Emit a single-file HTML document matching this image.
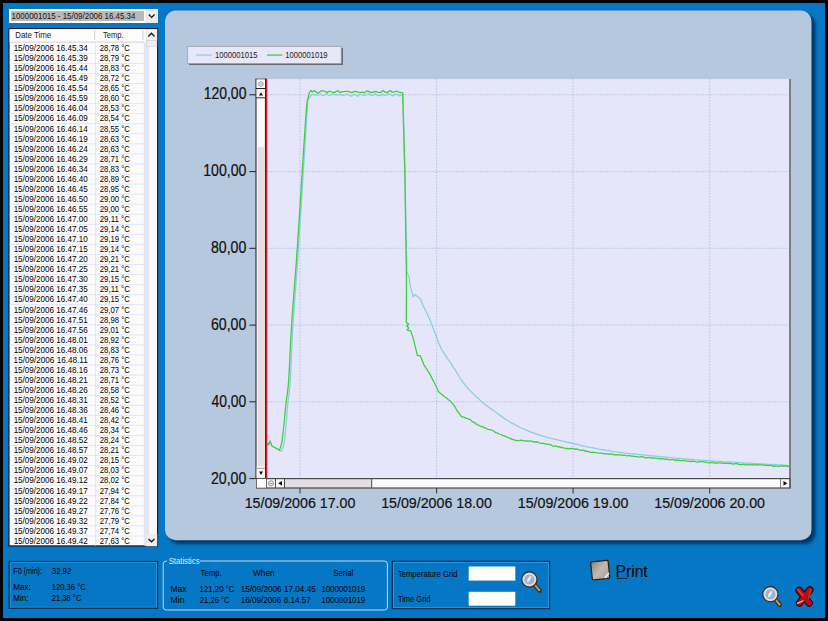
<!DOCTYPE html>
<html><head><meta charset="utf-8"><style>html,body{margin:0;padding:0;background:#000;overflow:hidden}svg{display:block}text{font-family:"Liberation Sans",sans-serif}</style></head>
<body><svg width="828" height="621" viewBox="0 0 828 621">
<rect width="828" height="621" fill="#000"/>
<rect x="3" y="3" width="822" height="615" fill="#0677c4"/>
<rect x="9" y="9" width="149" height="14" fill="#fdfdfd"/>
<rect x="11" y="11" width="133" height="10" fill="#b9b9b9"/>
<text transform="matrix(0.9336 0 0 1.0 11.50 18.80)" font-size="8.5" fill="#111">1000001015 - 15/09/2006 16.45.34</text>
<rect x="146" y="10" width="11" height="12.5" fill="#eeeef2" stroke="#d8d8e0" stroke-width="0.6"/>
<path d="M148.8 14.6 L151.7 17.4 L154.6 14.6" fill="none" stroke="#1a1a1a" stroke-width="1.4"/>
<rect x="8.3" y="28" width="149.9" height="518.6" fill="#1e1e1e"/>
<rect x="9.6" y="29.3" width="147.4" height="516" fill="#fbfbfb"/>
<rect x="9.6" y="29.3" width="136" height="12.7" fill="#fcfcfc"/>
<rect x="9.6" y="41.6" width="135" height="1" fill="#d9cfd3"/>
<rect x="94.2" y="30.5" width="0.9" height="9.5" fill="#c8c8c8"/>
<rect x="142.5" y="30.5" width="0.9" height="9.5" fill="#c8c8d8"/>
<text transform="matrix(0.8308 0 0 1.0 15.28 38.20)" font-size="9.5" fill="#1a1a1a">Date Time</text>
<text transform="matrix(0.8000 0 0 1.0 103.00 38.20)" font-size="9.5" fill="#1a1a1a">Temp.</text>
<rect x="143.8" y="42.6" width="5.4" height="503" fill="#e4e4f6"/>
<rect x="95" y="42.6" width="0.9" height="503" fill="#e2e2f4"/>
<rect x="9.6" y="52.90" width="134.2" height="0.9" fill="#e2e2f4"/>
<text transform="matrix(0.8982 0 0 1.0 13.63 51.10)" font-size="9.0" fill="#000">15/09/2006 16.45.34</text>
<text transform="matrix(0.8613 0 0 1.0 99.67 51.10)" font-size="9.0" fill="#000">28,78 °C</text>
<rect x="9.6" y="62.95" width="134.2" height="0.9" fill="#e2e2f4"/>
<text transform="matrix(0.8982 0 0 1.0 13.63 61.16)" font-size="9.0" fill="#000">15/09/2006 16.45.39</text>
<text transform="matrix(0.8613 0 0 1.0 99.67 61.16)" font-size="9.0" fill="#000">28,79 °C</text>
<rect x="9.6" y="73.01" width="134.2" height="0.9" fill="#e2e2f4"/>
<text transform="matrix(0.8982 0 0 1.0 13.63 71.21)" font-size="9.0" fill="#000">15/09/2006 16.45.44</text>
<text transform="matrix(0.8613 0 0 1.0 99.67 71.21)" font-size="9.0" fill="#000">28,83 °C</text>
<rect x="9.6" y="83.06" width="134.2" height="0.9" fill="#e2e2f4"/>
<text transform="matrix(0.8982 0 0 1.0 13.63 81.27)" font-size="9.0" fill="#000">15/09/2006 16.45.49</text>
<text transform="matrix(0.8613 0 0 1.0 99.67 81.27)" font-size="9.0" fill="#000">28,72 °C</text>
<rect x="9.6" y="93.12" width="134.2" height="0.9" fill="#e2e2f4"/>
<text transform="matrix(0.8982 0 0 1.0 13.63 91.32)" font-size="9.0" fill="#000">15/09/2006 16.45.54</text>
<text transform="matrix(0.8613 0 0 1.0 99.67 91.32)" font-size="9.0" fill="#000">28,65 °C</text>
<rect x="9.6" y="103.17" width="134.2" height="0.9" fill="#e2e2f4"/>
<text transform="matrix(0.8982 0 0 1.0 13.63 101.38)" font-size="9.0" fill="#000">15/09/2006 16.45.59</text>
<text transform="matrix(0.8613 0 0 1.0 99.67 101.38)" font-size="9.0" fill="#000">28,60 °C</text>
<rect x="9.6" y="113.23" width="134.2" height="0.9" fill="#e2e2f4"/>
<text transform="matrix(0.8982 0 0 1.0 13.63 111.43)" font-size="9.0" fill="#000">15/09/2006 16.46.04</text>
<text transform="matrix(0.8613 0 0 1.0 99.67 111.43)" font-size="9.0" fill="#000">28,53 °C</text>
<rect x="9.6" y="123.28" width="134.2" height="0.9" fill="#e2e2f4"/>
<text transform="matrix(0.8982 0 0 1.0 13.63 121.48)" font-size="9.0" fill="#000">15/09/2006 16.46.09</text>
<text transform="matrix(0.8613 0 0 1.0 99.67 121.48)" font-size="9.0" fill="#000">28,54 °C</text>
<rect x="9.6" y="133.34" width="134.2" height="0.9" fill="#e2e2f4"/>
<text transform="matrix(0.8982 0 0 1.0 13.63 131.54)" font-size="9.0" fill="#000">15/09/2006 16.46.14</text>
<text transform="matrix(0.8613 0 0 1.0 99.67 131.54)" font-size="9.0" fill="#000">28,55 °C</text>
<rect x="9.6" y="143.40" width="134.2" height="0.9" fill="#e2e2f4"/>
<text transform="matrix(0.8982 0 0 1.0 13.63 141.59)" font-size="9.0" fill="#000">15/09/2006 16.46.19</text>
<text transform="matrix(0.8613 0 0 1.0 99.67 141.59)" font-size="9.0" fill="#000">28,63 °C</text>
<rect x="9.6" y="153.45" width="134.2" height="0.9" fill="#e2e2f4"/>
<text transform="matrix(0.8982 0 0 1.0 13.63 151.65)" font-size="9.0" fill="#000">15/09/2006 16.46.24</text>
<text transform="matrix(0.8613 0 0 1.0 99.67 151.65)" font-size="9.0" fill="#000">28,63 °C</text>
<rect x="9.6" y="163.50" width="134.2" height="0.9" fill="#e2e2f4"/>
<text transform="matrix(0.8982 0 0 1.0 13.63 161.70)" font-size="9.0" fill="#000">15/09/2006 16.46.29</text>
<text transform="matrix(0.8613 0 0 1.0 99.67 161.70)" font-size="9.0" fill="#000">28,71 °C</text>
<rect x="9.6" y="173.56" width="134.2" height="0.9" fill="#e2e2f4"/>
<text transform="matrix(0.8982 0 0 1.0 13.63 171.76)" font-size="9.0" fill="#000">15/09/2006 16.46.34</text>
<text transform="matrix(0.8613 0 0 1.0 99.67 171.76)" font-size="9.0" fill="#000">28,83 °C</text>
<rect x="9.6" y="183.62" width="134.2" height="0.9" fill="#e2e2f4"/>
<text transform="matrix(0.8982 0 0 1.0 13.63 181.81)" font-size="9.0" fill="#000">15/09/2006 16.46.40</text>
<text transform="matrix(0.8613 0 0 1.0 99.67 181.81)" font-size="9.0" fill="#000">28,89 °C</text>
<rect x="9.6" y="193.67" width="134.2" height="0.9" fill="#e2e2f4"/>
<text transform="matrix(0.8982 0 0 1.0 13.63 191.87)" font-size="9.0" fill="#000">15/09/2006 16.46.45</text>
<text transform="matrix(0.8613 0 0 1.0 99.67 191.87)" font-size="9.0" fill="#000">28,95 °C</text>
<rect x="9.6" y="203.72" width="134.2" height="0.9" fill="#e2e2f4"/>
<text transform="matrix(0.8982 0 0 1.0 13.63 201.92)" font-size="9.0" fill="#000">15/09/2006 16.46.50</text>
<text transform="matrix(0.8613 0 0 1.0 99.67 201.92)" font-size="9.0" fill="#000">29,00 °C</text>
<rect x="9.6" y="213.78" width="134.2" height="0.9" fill="#e2e2f4"/>
<text transform="matrix(0.8982 0 0 1.0 13.63 211.98)" font-size="9.0" fill="#000">15/09/2006 16.46.55</text>
<text transform="matrix(0.8613 0 0 1.0 99.67 211.98)" font-size="9.0" fill="#000">29,00 °C</text>
<rect x="9.6" y="223.84" width="134.2" height="0.9" fill="#e2e2f4"/>
<text transform="matrix(0.8982 0 0 1.0 13.63 222.03)" font-size="9.0" fill="#000">15/09/2006 16.47.00</text>
<text transform="matrix(0.8806 0 0 1.0 99.66 222.03)" font-size="9.0" fill="#000">29,11 °C</text>
<rect x="9.6" y="233.89" width="134.2" height="0.9" fill="#e2e2f4"/>
<text transform="matrix(0.8982 0 0 1.0 13.63 232.09)" font-size="9.0" fill="#000">15/09/2006 16.47.05</text>
<text transform="matrix(0.8613 0 0 1.0 99.67 232.09)" font-size="9.0" fill="#000">29,14 °C</text>
<rect x="9.6" y="243.94" width="134.2" height="0.9" fill="#e2e2f4"/>
<text transform="matrix(0.8982 0 0 1.0 13.63 242.14)" font-size="9.0" fill="#000">15/09/2006 16.47.10</text>
<text transform="matrix(0.8613 0 0 1.0 99.67 242.14)" font-size="9.0" fill="#000">29,19 °C</text>
<rect x="9.6" y="254.00" width="134.2" height="0.9" fill="#e2e2f4"/>
<text transform="matrix(0.8982 0 0 1.0 13.63 252.20)" font-size="9.0" fill="#000">15/09/2006 16.47.15</text>
<text transform="matrix(0.8613 0 0 1.0 99.67 252.20)" font-size="9.0" fill="#000">29,14 °C</text>
<rect x="9.6" y="264.06" width="134.2" height="0.9" fill="#e2e2f4"/>
<text transform="matrix(0.8982 0 0 1.0 13.63 262.25)" font-size="9.0" fill="#000">15/09/2006 16.47.20</text>
<text transform="matrix(0.8613 0 0 1.0 99.67 262.25)" font-size="9.0" fill="#000">29,21 °C</text>
<rect x="9.6" y="274.11" width="134.2" height="0.9" fill="#e2e2f4"/>
<text transform="matrix(0.8982 0 0 1.0 13.63 272.31)" font-size="9.0" fill="#000">15/09/2006 16.47.25</text>
<text transform="matrix(0.8613 0 0 1.0 99.67 272.31)" font-size="9.0" fill="#000">29,21 °C</text>
<rect x="9.6" y="284.16" width="134.2" height="0.9" fill="#e2e2f4"/>
<text transform="matrix(0.8982 0 0 1.0 13.63 282.37)" font-size="9.0" fill="#000">15/09/2006 16.47.30</text>
<text transform="matrix(0.8613 0 0 1.0 99.67 282.37)" font-size="9.0" fill="#000">29,15 °C</text>
<rect x="9.6" y="294.22" width="134.2" height="0.9" fill="#e2e2f4"/>
<text transform="matrix(0.8982 0 0 1.0 13.63 292.42)" font-size="9.0" fill="#000">15/09/2006 16.47.35</text>
<text transform="matrix(0.8806 0 0 1.0 99.66 292.42)" font-size="9.0" fill="#000">29,11 °C</text>
<rect x="9.6" y="304.27" width="134.2" height="0.9" fill="#e2e2f4"/>
<text transform="matrix(0.8982 0 0 1.0 13.63 302.48)" font-size="9.0" fill="#000">15/09/2006 16.47.40</text>
<text transform="matrix(0.8613 0 0 1.0 99.67 302.48)" font-size="9.0" fill="#000">29,15 °C</text>
<rect x="9.6" y="314.33" width="134.2" height="0.9" fill="#e2e2f4"/>
<text transform="matrix(0.8982 0 0 1.0 13.63 312.53)" font-size="9.0" fill="#000">15/09/2006 16.47.46</text>
<text transform="matrix(0.8613 0 0 1.0 99.67 312.53)" font-size="9.0" fill="#000">29,07 °C</text>
<rect x="9.6" y="324.38" width="134.2" height="0.9" fill="#e2e2f4"/>
<text transform="matrix(0.8982 0 0 1.0 13.63 322.59)" font-size="9.0" fill="#000">15/09/2006 16.47.51</text>
<text transform="matrix(0.8613 0 0 1.0 99.67 322.59)" font-size="9.0" fill="#000">28,98 °C</text>
<rect x="9.6" y="334.44" width="134.2" height="0.9" fill="#e2e2f4"/>
<text transform="matrix(0.8982 0 0 1.0 13.63 332.64)" font-size="9.0" fill="#000">15/09/2006 16.47.56</text>
<text transform="matrix(0.8613 0 0 1.0 99.67 332.64)" font-size="9.0" fill="#000">29,01 °C</text>
<rect x="9.6" y="344.49" width="134.2" height="0.9" fill="#e2e2f4"/>
<text transform="matrix(0.8982 0 0 1.0 13.63 342.69)" font-size="9.0" fill="#000">15/09/2006 16.48.01</text>
<text transform="matrix(0.8613 0 0 1.0 99.67 342.69)" font-size="9.0" fill="#000">28,92 °C</text>
<rect x="9.6" y="354.55" width="134.2" height="0.9" fill="#e2e2f4"/>
<text transform="matrix(0.8982 0 0 1.0 13.63 352.75)" font-size="9.0" fill="#000">15/09/2006 16.48.06</text>
<text transform="matrix(0.8613 0 0 1.0 99.67 352.75)" font-size="9.0" fill="#000">28,83 °C</text>
<rect x="9.6" y="364.60" width="134.2" height="0.9" fill="#e2e2f4"/>
<text transform="matrix(0.9065 0 0 1.0 13.62 362.81)" font-size="9.0" fill="#000">15/09/2006 16.48.11</text>
<text transform="matrix(0.8613 0 0 1.0 99.67 362.81)" font-size="9.0" fill="#000">28,76 °C</text>
<rect x="9.6" y="374.66" width="134.2" height="0.9" fill="#e2e2f4"/>
<text transform="matrix(0.8982 0 0 1.0 13.63 372.86)" font-size="9.0" fill="#000">15/09/2006 16.48.16</text>
<text transform="matrix(0.8613 0 0 1.0 99.67 372.86)" font-size="9.0" fill="#000">28,73 °C</text>
<rect x="9.6" y="384.71" width="134.2" height="0.9" fill="#e2e2f4"/>
<text transform="matrix(0.8982 0 0 1.0 13.63 382.92)" font-size="9.0" fill="#000">15/09/2006 16.48.21</text>
<text transform="matrix(0.8613 0 0 1.0 99.67 382.92)" font-size="9.0" fill="#000">28,71 °C</text>
<rect x="9.6" y="394.77" width="134.2" height="0.9" fill="#e2e2f4"/>
<text transform="matrix(0.8982 0 0 1.0 13.63 392.97)" font-size="9.0" fill="#000">15/09/2006 16.48.26</text>
<text transform="matrix(0.8613 0 0 1.0 99.67 392.97)" font-size="9.0" fill="#000">28,58 °C</text>
<rect x="9.6" y="404.82" width="134.2" height="0.9" fill="#e2e2f4"/>
<text transform="matrix(0.8982 0 0 1.0 13.63 403.03)" font-size="9.0" fill="#000">15/09/2006 16.48.31</text>
<text transform="matrix(0.8613 0 0 1.0 99.67 403.03)" font-size="9.0" fill="#000">28,52 °C</text>
<rect x="9.6" y="414.88" width="134.2" height="0.9" fill="#e2e2f4"/>
<text transform="matrix(0.8982 0 0 1.0 13.63 413.08)" font-size="9.0" fill="#000">15/09/2006 16.48.36</text>
<text transform="matrix(0.8613 0 0 1.0 99.67 413.08)" font-size="9.0" fill="#000">28,46 °C</text>
<rect x="9.6" y="424.93" width="134.2" height="0.9" fill="#e2e2f4"/>
<text transform="matrix(0.8982 0 0 1.0 13.63 423.13)" font-size="9.0" fill="#000">15/09/2006 16.48.41</text>
<text transform="matrix(0.8613 0 0 1.0 99.67 423.13)" font-size="9.0" fill="#000">28,42 °C</text>
<rect x="9.6" y="434.99" width="134.2" height="0.9" fill="#e2e2f4"/>
<text transform="matrix(0.8982 0 0 1.0 13.63 433.19)" font-size="9.0" fill="#000">15/09/2006 16.48.46</text>
<text transform="matrix(0.8613 0 0 1.0 99.67 433.19)" font-size="9.0" fill="#000">28,34 °C</text>
<rect x="9.6" y="445.04" width="134.2" height="0.9" fill="#e2e2f4"/>
<text transform="matrix(0.8982 0 0 1.0 13.63 443.25)" font-size="9.0" fill="#000">15/09/2006 16.48.52</text>
<text transform="matrix(0.8613 0 0 1.0 99.67 443.25)" font-size="9.0" fill="#000">28,24 °C</text>
<rect x="9.6" y="455.10" width="134.2" height="0.9" fill="#e2e2f4"/>
<text transform="matrix(0.8982 0 0 1.0 13.63 453.30)" font-size="9.0" fill="#000">15/09/2006 16.48.57</text>
<text transform="matrix(0.8613 0 0 1.0 99.67 453.30)" font-size="9.0" fill="#000">28,21 °C</text>
<rect x="9.6" y="465.15" width="134.2" height="0.9" fill="#e2e2f4"/>
<text transform="matrix(0.8982 0 0 1.0 13.63 463.36)" font-size="9.0" fill="#000">15/09/2006 16.49.02</text>
<text transform="matrix(0.8613 0 0 1.0 99.67 463.36)" font-size="9.0" fill="#000">28,15 °C</text>
<rect x="9.6" y="475.21" width="134.2" height="0.9" fill="#e2e2f4"/>
<text transform="matrix(0.8982 0 0 1.0 13.63 473.41)" font-size="9.0" fill="#000">15/09/2006 16.49.07</text>
<text transform="matrix(0.8613 0 0 1.0 99.67 473.41)" font-size="9.0" fill="#000">28,03 °C</text>
<rect x="9.6" y="485.26" width="134.2" height="0.9" fill="#e2e2f4"/>
<text transform="matrix(0.8982 0 0 1.0 13.63 483.47)" font-size="9.0" fill="#000">15/09/2006 16.49.12</text>
<text transform="matrix(0.8613 0 0 1.0 99.67 483.47)" font-size="9.0" fill="#000">28,02 °C</text>
<rect x="9.6" y="495.32" width="134.2" height="0.9" fill="#e2e2f4"/>
<text transform="matrix(0.8982 0 0 1.0 13.63 493.52)" font-size="9.0" fill="#000">15/09/2006 16.49.17</text>
<text transform="matrix(0.8613 0 0 1.0 99.67 493.52)" font-size="9.0" fill="#000">27,94 °C</text>
<rect x="9.6" y="505.37" width="134.2" height="0.9" fill="#e2e2f4"/>
<text transform="matrix(0.8982 0 0 1.0 13.63 503.57)" font-size="9.0" fill="#000">15/09/2006 16.49.22</text>
<text transform="matrix(0.8613 0 0 1.0 99.67 503.57)" font-size="9.0" fill="#000">27,84 °C</text>
<rect x="9.6" y="515.43" width="134.2" height="0.9" fill="#e2e2f4"/>
<text transform="matrix(0.8982 0 0 1.0 13.63 513.63)" font-size="9.0" fill="#000">15/09/2006 16.49.27</text>
<text transform="matrix(0.8613 0 0 1.0 99.67 513.63)" font-size="9.0" fill="#000">27,76 °C</text>
<rect x="9.6" y="525.49" width="134.2" height="0.9" fill="#e2e2f4"/>
<text transform="matrix(0.8982 0 0 1.0 13.63 523.68)" font-size="9.0" fill="#000">15/09/2006 16.49.32</text>
<text transform="matrix(0.8613 0 0 1.0 99.67 523.68)" font-size="9.0" fill="#000">27,79 °C</text>
<rect x="9.6" y="535.54" width="134.2" height="0.9" fill="#e2e2f4"/>
<text transform="matrix(0.8982 0 0 1.0 13.63 533.74)" font-size="9.0" fill="#000">15/09/2006 16.49.37</text>
<text transform="matrix(0.8613 0 0 1.0 99.67 533.74)" font-size="9.0" fill="#000">27,74 °C</text>
<text transform="matrix(0.8982 0 0 1.0 13.63 543.79)" font-size="9.0" fill="#000">15/09/2006 16.49.42</text>
<text transform="matrix(0.8613 0 0 1.0 99.67 543.79)" font-size="9.0" fill="#000">27,63 °C</text>
<rect x="146.3" y="29.3" width="10.7" height="11.4" fill="#f4f4f8" stroke="#dcdce6" stroke-width="0.5"/>
<path d="M148.3 36.4 L151.4 33.2 L154.5 36.4" fill="none" stroke="#1a1a1a" stroke-width="1.4"/>
<rect x="146.6" y="40.7" width="10.3" height="5.6" fill="#ececf2" stroke="#c8c8d0" stroke-width="0.5"/>
<rect x="146.3" y="534.2" width="10.7" height="11.8" fill="#f0f0f4" stroke="#dcdce6" stroke-width="0.5"/>
<path d="M148.5 539 L151.5 541.8 L154.5 539" fill="none" stroke="#1a1a1a" stroke-width="1.4"/>
<defs><filter id="sh" x="-5%" y="-5%" width="110%" height="110%"><feGaussianBlur stdDeviation="1.6"/></filter></defs>
<rect x="168.5" y="14" width="647" height="530" rx="11" fill="#03396a" filter="url(#sh)"/>
<rect x="165" y="10.6" width="646.5" height="529.6" rx="10.5" fill="#b6c8de"/>
<rect x="189" y="48" width="154" height="17" fill="#6a6a72"/>
<rect x="187.7" y="46.5" width="153.5" height="17" fill="#e7e7f9" stroke="#9a9aa4" stroke-width="0.7"/>
<rect x="196" y="54.3" width="16" height="1.6" fill="#a0d6e0"/>
<rect x="267" y="54.3" width="15.3" height="1.6" fill="#64d264"/>
<text transform="matrix(0.8510 0 0 1.0 214.96 58.10)" font-size="9" fill="#222">1000001015</text>
<text transform="matrix(0.8469 0 0 1.0 285.26 58.10)" font-size="9" fill="#222">1000001019</text>
<rect x="267.2" y="79.1" width="522.0" height="399.29999999999995" fill="#e6e6fa"/>
<rect x="789.2" y="79.1" width="1.6" height="400" fill="#6a6a6a"/>
<line x1="267.2" y1="401.8" x2="789.2" y2="401.8" stroke="#a6bed8" stroke-width="0.9" stroke-dasharray="1.4,1.6"/>
<line x1="267.2" y1="325.1" x2="789.2" y2="325.1" stroke="#a6bed8" stroke-width="0.9" stroke-dasharray="1.4,1.6"/>
<line x1="267.2" y1="248.3" x2="789.2" y2="248.3" stroke="#a6bed8" stroke-width="0.9" stroke-dasharray="1.4,1.6"/>
<line x1="267.2" y1="171.6" x2="789.2" y2="171.6" stroke="#a6bed8" stroke-width="0.9" stroke-dasharray="1.4,1.6"/>
<line x1="267.2" y1="94.8" x2="789.2" y2="94.8" stroke="#a6bed8" stroke-width="0.9" stroke-dasharray="1.4,1.6"/>
<line x1="300.0" y1="79.1" x2="300.0" y2="478.4" stroke="#a6bed8" stroke-width="0.9" stroke-dasharray="1.4,1.6"/>
<line x1="436.6" y1="79.1" x2="436.6" y2="478.4" stroke="#a6bed8" stroke-width="0.9" stroke-dasharray="1.4,1.6"/>
<line x1="573.1" y1="79.1" x2="573.1" y2="478.4" stroke="#a6bed8" stroke-width="0.9" stroke-dasharray="1.4,1.6"/>
<line x1="709.7" y1="79.1" x2="709.7" y2="478.4" stroke="#a6bed8" stroke-width="0.9" stroke-dasharray="1.4,1.6"/>
<polyline points="267.2,444.5 270.0,442.0 272.0,446.0 281.0,451.5 283.5,446.0 283.9,443.7 284.4,440.9 284.8,437.8 285.2,434.1 285.6,430.0 285.9,427.4 286.1,424.5 286.4,421.3 286.7,418.0 286.9,414.7 287.2,411.3 287.5,408.0 287.7,404.9 288.0,402.0 288.3,398.8 288.7,396.2 289.0,393.9 289.3,391.4 289.6,388.5 290.0,384.8 290.3,380.0 290.4,377.8 290.6,375.5 290.7,373.0 290.8,370.4 290.9,367.7 291.1,364.9 291.2,362.0 291.3,359.0 291.5,355.9 291.6,352.8 291.7,349.5 291.9,346.2 292.0,342.8 292.2,339.3 292.4,335.8 292.6,332.3 292.8,328.6 293.0,325.0 293.2,322.4 293.3,319.7 293.5,317.0 293.7,314.4 293.9,311.7 294.1,308.9 294.3,306.2 294.5,303.4 294.7,300.6 294.9,297.8 295.1,294.9 295.3,291.9 295.6,288.9 295.8,285.9 296.0,282.8 296.3,279.7 296.5,276.4 296.7,273.2 297.0,269.8 297.2,266.4 297.5,262.9 297.7,259.3 298.0,255.6 298.2,251.9 298.5,248.0 298.7,245.4 298.8,242.8 299.0,240.0 299.2,237.2 299.4,234.2 299.6,231.2 299.8,228.1 300.0,225.0 300.2,221.8 300.4,218.5 300.6,215.2 300.8,211.8 301.1,208.4 301.3,205.0 301.5,201.6 301.7,198.1 301.9,194.7 302.1,191.2 302.4,187.8 302.6,184.3 302.8,180.9 303.0,177.5 303.2,174.2 303.4,170.8 303.6,167.6 303.8,164.3 304.0,161.2 304.2,158.1 304.4,155.0 304.6,152.1 304.8,149.2 305.0,146.4 305.1,143.7 305.3,141.1 305.4,138.7 305.6,136.3 305.7,134.1 305.9,132.0 306.0,130.0 306.4,123.3 306.8,117.9 307.0,113.7 307.2,110.4 307.3,107.8 307.5,105.9 307.6,104.3 307.7,102.9 307.8,101.5 308.0,100.0 310.1,96.5 311.6,94.6 313.8,94.5 316.0,95.4 318.2,94.8 320.4,94.0 322.6,95.8 324.8,94.7 327.0,93.8 329.2,95.7 331.4,94.6 333.6,94.1 335.8,95.0 338.0,94.9 340.2,94.1 342.4,95.6 344.6,95.2 346.8,94.0 349.0,95.1 351.2,96.3 353.4,94.5 355.6,94.6 357.8,96.4 360.0,94.1 362.2,94.9 364.4,95.5 366.6,94.5 368.8,93.8 371.0,95.4 373.2,95.6 375.4,93.8 377.6,95.5 379.8,95.6 382.0,94.1 384.2,95.2 386.4,95.1 388.6,93.8 390.8,94.5 393.0,96.0 395.2,94.4 397.4,94.4 399.6,95.9 401.8,94.7 404.0,94.2 403.0,94.8 404.8,170.0 406.9,272.3 409.1,276.7 410.3,286.4 413.1,296.9 415.1,294.5 420.4,298.9 422.8,305.0 424.7,308.8 427.4,314.3 430.0,320.0 432.3,325.8 434.6,331.9 436.7,337.4 438.7,343.1 441.5,349.0 443.2,351.8 445.2,354.9 447.4,358.3 449.7,361.7 452.0,365.1 454.1,368.3 456.4,371.9 458.6,375.5 460.8,379.0 463.1,382.4 465.7,385.7 467.7,388.0 469.8,390.4 472.1,392.7 474.4,394.9 476.7,397.1 479.0,399.2 481.2,401.2 483.4,403.1 485.7,404.9 487.9,406.6 490.1,408.2 492.3,409.8 494.5,411.3 496.6,412.8 498.9,414.5 501.1,416.1 503.2,417.6 505.3,419.1 507.6,420.5 510.0,422.0 511.9,423.1 514.0,424.2 516.1,425.3 518.2,426.4 520.4,427.5 522.6,428.5 524.8,429.5 526.9,430.4 529.0,431.3 531.1,432.1 533.2,432.9 535.3,433.7 537.5,434.4 539.6,435.1 541.7,435.8 543.8,436.4 545.9,437.0 548.1,437.6 550.3,438.2 552.5,438.7 554.7,439.2 556.8,439.7 558.8,440.1 560.7,440.6 563.0,441.2 564.9,441.6 566.8,442.1 568.7,442.5 570.8,443.0 573.4,443.6 575.2,444.0 577.0,444.4 579.0,444.9 581.0,445.3 583.2,445.8 585.3,446.3 587.6,446.8 589.9,447.3 592.2,447.7 594.5,448.2 596.5,448.6 598.4,448.9 600.4,449.3 602.5,449.7 604.5,450.0 606.6,450.4 608.8,450.7 610.9,451.1 613.1,451.4 615.3,451.8 617.6,452.1 619.9,452.4 621.8,452.6 623.7,452.9 625.6,453.1 627.6,453.3 629.6,453.6 631.6,453.8 633.6,454.0 635.7,454.2 637.7,454.4 639.8,454.6 641.9,454.8 643.9,455.0 646.0,455.2 648.0,455.4 650.0,455.6 652.0,455.8 654.0,456.0 656.0,456.2 658.0,456.4 660.0,456.6 662.0,456.8 664.0,457.0 666.0,457.2 668.0,457.4 670.0,457.6 672.0,457.8 674.0,458.0 676.0,458.1 678.0,458.3 680.0,458.5 682.1,458.7 684.2,458.9 686.2,459.0 688.2,459.2 690.2,459.4 692.1,459.5 694.2,459.7 696.2,459.8 698.2,460.0 700.4,460.2 702.5,460.3 704.8,460.5 707.2,460.6 709.6,460.8 711.4,460.9 713.2,461.0 715.1,461.2 717.0,461.3 719.0,461.4 721.0,461.5 723.0,461.6 725.0,461.8 727.1,461.9 729.2,462.0 731.3,462.1 733.4,462.2 735.5,462.4 737.6,462.5 739.7,462.6 741.8,462.7 743.9,462.8 746.0,463.0 748.0,463.1 750.0,463.2 752.1,463.3 754.4,463.5 756.7,463.6 759.0,463.7 761.4,463.8 763.8,464.0 766.2,464.1 768.6,464.3 771.0,464.4 773.3,464.5 775.5,464.6 777.7,464.8 779.8,464.9 781.7,465.0 783.5,465.1 785.2,465.2 786.7,465.3 788.1,465.3 789.2,465.4" fill="none" stroke="#8ccfdc" stroke-width="1.3" stroke-linejoin="round"/>
<polyline points="267.2,443.6 268.5,445.0 270.0,440.9 272.0,446.0 279.3,450.0 280.3,448.0 281.5,444.0 281.9,441.6 282.3,438.8 282.7,435.6 283.1,432.0 283.6,428.0 283.9,425.2 284.2,422.0 284.5,418.7 284.9,415.1 285.2,411.6 285.5,408.1 285.9,404.7 286.2,401.6 286.6,398.6 286.9,396.1 287.3,393.8 287.6,391.3 288.0,388.5 288.3,384.8 288.7,380.0 288.8,377.8 289.0,375.5 289.1,373.0 289.3,370.4 289.4,367.8 289.5,365.0 289.7,362.1 289.8,359.1 289.9,356.0 290.1,352.8 290.3,349.5 290.4,346.2 290.6,342.8 290.8,339.3 290.9,335.8 291.2,332.3 291.4,328.6 291.6,325.0 291.8,322.4 292.0,319.7 292.1,317.0 292.3,314.4 292.5,311.7 292.7,308.9 292.9,306.2 293.2,303.4 293.4,300.6 293.6,297.8 293.8,294.9 294.0,291.9 294.3,288.9 294.5,285.9 294.7,282.8 295.0,279.7 295.2,276.4 295.5,273.2 295.7,269.8 296.0,266.4 296.3,262.9 296.5,259.3 296.8,255.6 297.0,251.9 297.3,248.0 297.5,245.4 297.7,242.8 297.8,240.0 298.0,237.2 298.2,234.2 298.4,231.2 298.6,228.1 298.8,225.0 299.0,221.8 299.2,218.5 299.5,215.2 299.7,211.8 299.9,208.4 300.1,205.0 300.3,201.6 300.5,198.1 300.8,194.7 301.0,191.2 301.2,187.8 301.4,184.3 301.6,180.9 301.8,177.5 302.1,174.2 302.3,170.8 302.5,167.6 302.7,164.3 302.9,161.2 303.1,158.1 303.3,155.0 303.5,152.1 303.6,149.2 303.8,146.4 304.0,143.7 304.2,141.1 304.3,138.7 304.5,136.3 304.6,134.1 304.8,132.0 304.9,130.0 305.4,123.3 305.7,117.9 306.1,113.6 306.3,110.3 306.5,107.7 306.7,105.7 306.9,104.1 307.0,102.8 307.2,101.4 307.3,100.0 308.0,98.6 308.7,95.5 309.3,92.6 311.0,90.3 312.3,92.0 314.0,90.6 318.0,93.3 321.6,90.6 324.9,91.3 326.9,92.6 329.6,91.0 332.9,92.6 335.6,92.0 337.9,90.6 339.6,92.3 344.9,91.3 348.2,91.3 351.5,92.6 354.8,91.3 360.0,92.6 362.3,92.2 364.6,92.8 366.9,90.8 369.2,91.6 371.5,92.7 373.8,91.9 376.1,91.5 378.4,92.4 380.7,92.4 383.0,90.5 385.3,92.3 387.6,92.5 389.9,90.5 392.2,92.1 394.5,91.9 396.8,91.2 399.1,92.1 401.4,92.7 402.6,93.0 404.8,170.0 406.5,280.0 406.3,322.4 408.6,324.0 406.8,326.0 408.8,328.0 407.2,330.0 408.7,330.6 410.6,330.6 413.5,339.3 417.4,355.7 420.3,355.7 424.2,365.4 425.4,367.0 427.1,369.8 429.0,372.6 430.9,376.1 432.8,379.9 434.8,383.7 436.8,387.8 438.6,391.8 440.6,393.6 442.4,394.7 444.4,396.7 446.2,397.7 448.1,399.5 450.1,400.9 452.2,403.2 453.9,405.1 455.7,408.3 457.5,411.4 459.3,413.7 460.9,415.9 462.6,417.2 464.1,417.1 465.6,418.1 467.6,418.7 469.0,419.2 470.6,419.9 472.2,421.6 474.0,422.3 475.7,423.6 477.5,424.8 479.2,425.5 480.8,426.5 482.5,426.7 484.1,427.7 485.7,428.0 487.3,429.1 489.0,429.7 490.8,429.7 492.4,430.5 494.1,431.3 495.8,432.7 497.5,433.0 499.3,434.0 501.0,434.5 502.7,435.4 504.3,435.9 506.1,436.6 507.8,437.5 509.5,438.1 511.1,439.0 512.8,439.3 514.4,440.0 516.0,440.3 517.8,440.7 519.5,440.5 521.1,440.1 522.9,440.7 524.7,440.8 526.9,441.0 528.3,440.9 529.9,441.2 531.5,441.0 533.2,441.9 535.0,442.0 536.8,442.0 538.5,442.2 540.3,443.2 542.1,443.7 543.8,443.2 545.5,444.2 547.2,444.2 549.0,444.4 550.8,444.9 552.5,445.8 554.2,446.3 555.9,445.9 557.6,446.8 559.2,446.6 560.7,447.5 562.7,447.5 564.4,448.2 566.0,448.5 567.6,448.3 569.3,448.9 571.2,448.5 573.4,448.6 574.7,449.3 576.1,449.0 577.6,449.4 579.1,449.9 580.7,450.3 582.3,450.2 584.0,450.4 585.7,451.4 587.4,451.2 589.2,452.0 590.9,452.3 592.7,452.1 594.5,452.4 596.1,452.6 597.6,452.9 599.2,453.1 600.8,453.2 602.5,453.4 604.1,453.9 605.8,453.7 607.5,453.8 609.2,454.2 610.9,453.9 612.7,454.1 614.5,454.9 616.2,454.7 618.1,454.9 619.9,454.6 621.5,455.1 623.0,455.4 624.6,455.0 626.3,455.7 627.9,455.9 629.6,455.5 631.3,456.2 633.0,456.2 634.7,456.6 636.4,456.4 638.1,456.9 639.8,457.1 641.5,456.6 643.2,456.8 644.9,457.5 646.6,457.9 648.3,457.4 650.0,457.8 651.7,458.0 653.3,457.9 655.0,458.1 656.7,458.3 658.4,458.5 660.0,458.8 661.7,458.7 663.4,458.9 665.0,459.4 666.7,458.9 668.4,459.6 670.0,459.9 671.7,459.6 673.4,459.7 675.0,460.4 676.7,460.0 678.3,460.1 680.0,460.4 681.6,460.8 683.2,460.4 684.8,460.7 686.4,460.8 688.0,461.4 689.5,461.2 691.0,461.6 692.6,461.1 694.2,461.4 695.7,461.8 697.3,462.1 698.9,461.8 700.6,461.7 702.3,461.7 704.0,462.2 705.8,462.0 707.7,462.7 709.6,462.8 711.0,462.3 712.5,462.5 714.0,463.0 715.5,463.0 717.0,463.2 718.6,462.9 720.2,462.8 721.8,463.0 723.4,463.5 725.0,463.1 726.7,463.3 728.4,463.4 730.0,463.5 731.7,463.6 733.4,464.2 735.1,463.6 736.8,463.5 738.5,464.4 740.2,464.5 741.8,464.6 743.5,464.2 745.1,464.8 746.8,464.8 748.4,464.3 750.0,464.8 751.7,465.0 753.4,464.9 755.2,464.9 757.1,464.7 758.9,464.9 760.8,464.9 762.7,464.8 764.6,465.4 766.5,465.2 768.4,465.7 770.3,465.1 772.1,466.0 773.9,465.9 775.7,466.2 777.4,466.2 779.1,466.3 780.7,466.1 782.2,465.6 783.6,466.4 784.9,465.9 786.2,466.1 787.3,466.5 788.3,466.4 789.2,466.4" fill="none" stroke="#44cc44" stroke-width="1.3" stroke-linejoin="round"/>
<rect x="255.2" y="78.6" width="10.7" height="400" fill="#585858"/>
<rect x="264.9" y="78.6" width="1" height="400" fill="#202020"/>
<rect x="256.7" y="79.6" width="8.2" height="398" fill="#fafafa"/>
<rect x="257.6" y="147.2" width="7" height="319" fill="#e4dee3"/>
<rect x="256.7" y="146.6" width="8.2" height="0.7" fill="#e8e8f8"/>
<rect x="256.7" y="79.6" width="8.2" height="8.4" fill="#fbfbfb"/>
<rect x="256" y="88" width="9.8" height="1" fill="#222"/>
<circle cx="260.9" cy="84" r="2.3" fill="none" stroke="#808080" stroke-width="0.8"/><rect x="259.5" y="83.6" width="2.8" height="0.8" fill="#808080"/>
<rect x="256.7" y="89" width="8.2" height="8.4" fill="#f3f3f6"/>
<rect x="256" y="97.3" width="9.8" height="1" fill="#333"/>
<path d="M259 95.6 L261 92.2 L263 95.6 Z" fill="#111"/>
<rect x="256.7" y="466.5" width="8.2" height="1.3" fill="#fafafa"/>
<rect x="256.7" y="467.8" width="8.2" height="1" fill="#8a8a8a"/>
<rect x="256.7" y="468.8" width="8.2" height="9" fill="#f8f8fa"/>
<path d="M259 471.6 L261 475 L263 471.6 Z" fill="#111"/>
<rect x="265.9" y="78.6" width="1.4" height="400" fill="#d42228"/>
<rect x="256" y="478" width="534.8" height="10.6" fill="#4a4a4a"/>
<rect x="256.8" y="478.9" width="9.4" height="8.8" fill="#fcfcfc"/>
<rect x="267" y="479.2" width="8" height="8.2" fill="#f6f6f8"/>
<circle cx="271" cy="483.3" r="2.5" fill="none" stroke="#777" stroke-width="0.8"/><rect x="269.5" y="482.9" width="3" height="0.8" fill="#777"/>
<rect x="276" y="479.2" width="8" height="8.2" fill="#f6f6f8"/>
<path d="M282 480.9 L278.2 483.3 L282 485.7 Z" fill="#111"/>
<rect x="285" y="479.2" width="86.2" height="8.2" fill="#e4dee3"/>
<rect x="372.2" y="479.2" width="408" height="8.2" fill="#fcfcfc"/>
<rect x="780.8" y="479.2" width="8.4" height="8.2" fill="#f6f6f8"/>
<path d="M783.5 480.9 L787.3 483.3 L783.5 485.7 Z" fill="#111"/>
<rect x="249.4" y="94.3" width="6.4" height="1" fill="#222"/>
<text transform="matrix(0.8962 0 0 1.0 203.68 99.40)" font-size="15.6" fill="#111" stroke="#111" stroke-width="0.2">120,00</text>
<rect x="249.4" y="171.1" width="6.4" height="1" fill="#222"/>
<text transform="matrix(0.9049 0 0 1.0 203.27 176.16)" font-size="15.6" fill="#111" stroke="#111" stroke-width="0.2">100,00</text>
<rect x="249.4" y="247.8" width="6.4" height="1" fill="#222"/>
<text transform="matrix(0.9060 0 0 1.0 210.92 252.92)" font-size="15.6" fill="#111" stroke="#111" stroke-width="0.2">80,00</text>
<rect x="249.4" y="324.6" width="6.4" height="1" fill="#222"/>
<text transform="matrix(0.9060 0 0 1.0 210.92 329.68)" font-size="15.6" fill="#111" stroke="#111" stroke-width="0.2">60,00</text>
<rect x="249.4" y="401.3" width="6.4" height="1" fill="#222"/>
<text transform="matrix(0.8941 0 0 1.0 211.38 407.24)" font-size="15.6" fill="#111" stroke="#111" stroke-width="0.2">40,00</text>
<rect x="249.4" y="478.1" width="6.4" height="1" fill="#222"/>
<text transform="matrix(0.9060 0 0 1.0 210.92 484.00)" font-size="15.6" fill="#111" stroke="#111" stroke-width="0.2">20,00</text>
<rect x="299.5" y="488" width="1" height="5.5" fill="#333"/>
<text transform="matrix(0.9237 0 0 1.0 244.65 507.60)" font-size="15.4" fill="#111" stroke="#111" stroke-width="0.2">15/09/2006 17.00</text>
<rect x="436.1" y="488" width="1" height="5.5" fill="#333"/>
<text transform="matrix(0.9237 0 0 1.0 381.20 507.60)" font-size="15.4" fill="#111" stroke="#111" stroke-width="0.2">15/09/2006 18.00</text>
<rect x="572.6" y="488" width="1" height="5.5" fill="#333"/>
<text transform="matrix(0.9237 0 0 1.0 517.75 507.60)" font-size="15.4" fill="#111" stroke="#111" stroke-width="0.2">15/09/2006 19.00</text>
<rect x="709.2" y="488" width="1" height="5.5" fill="#333"/>
<text transform="matrix(0.9237 0 0 1.0 654.30 507.60)" font-size="15.4" fill="#111" stroke="#111" stroke-width="0.2">15/09/2006 20.00</text>
<rect x="10.2" y="562.6" width="146.3" height="44.6" fill="none" stroke="#3a96dc" stroke-width="0.8"/>
<rect x="9.1" y="561.5" width="148.5" height="46.8" fill="none" stroke="#0b2a4a" stroke-width="1.1"/>
<text transform="matrix(0.8271 0 0 1.0 13.28 574.20)" font-size="8.7" fill="#000">F0 (min):</text>
<text transform="matrix(0.8916 0 0 1.0 51.85 574.20)" font-size="8.7" fill="#000">32,92</text>
<text transform="matrix(0.9333 0 0 1.0 13.20 589.80)" font-size="8.7" fill="#000">Max:</text>
<text transform="matrix(0.8827 0 0 1.0 51.64 589.80)" font-size="8.7" fill="#000">120,36 °C</text>
<text transform="matrix(0.9267 0 0 1.0 13.21 600.90)" font-size="8.7" fill="#000">Min:</text>
<text transform="matrix(0.8697 0 0 1.0 51.87 600.90)" font-size="8.7" fill="#000">21,38 °C</text>
<rect x="163.2" y="561" width="224.2" height="49" rx="3" fill="none" stroke="#c9d6e4" stroke-width="1"/>
<rect x="167" y="556" width="33" height="8" fill="#0677c4"/>
<text transform="matrix(0.8882 0 0 1.0 168.66 564.30)" font-size="8.7" fill="#e0ecf6">Statistics</text>
<text transform="matrix(0.8923 0 0 1.0 200.58 575.80)" font-size="8.7" fill="#000">Temp.</text>
<text transform="matrix(0.9573 0 0 1.0 253.00 575.80)" font-size="8.7" fill="#000">When</text>
<text transform="matrix(0.8952 0 0 1.0 333.35 575.80)" font-size="8.7" fill="#000">Serial</text>
<text transform="matrix(0.9677 0 0 1.0 170.47 591.80)" font-size="8.7" fill="#000">Max</text>
<text transform="matrix(1.0039 0 0 1.0 170.45 602.90)" font-size="8.7" fill="#000">Min</text>
<text transform="matrix(0.9013 0 0 1.0 199.62 591.80)" font-size="8.7" fill="#000">121,20 °C</text>
<text transform="matrix(0.8788 0 0 1.0 199.86 602.90)" font-size="8.7" fill="#000">21,26 °C</text>
<text transform="matrix(0.9427 0 0 1.0 240.69 591.80)" font-size="8.7" fill="#000">15/09/2006 17.04.45</text>
<text transform="matrix(0.9369 0 0 1.0 240.70 602.90)" font-size="8.7" fill="#000">16/09/2006 8.14.57</text>
<text transform="matrix(0.9122 0 0 1.0 321.22 591.80)" font-size="8.7" fill="#000">1000001019</text>
<text transform="matrix(0.9122 0 0 1.0 321.22 602.90)" font-size="8.7" fill="#000">1000001019</text>
<rect x="393.4" y="562.4" width="155.1" height="45.2" fill="none" stroke="#3a96dc" stroke-width="0.8"/>
<rect x="392.3" y="561.3" width="157.3" height="47.4" fill="none" stroke="#0b2a4a" stroke-width="1.1"/>
<text transform="matrix(0.7827 0 0 1.0 397.90 576.90)" font-size="9.8" fill="#000">Temperature Grid</text>
<text transform="matrix(0.7641 0 0 1.0 397.91 601.60)" font-size="9.8" fill="#000">Time Grid</text>
<rect x="468.7" y="566.5" width="46.6" height="14.1" fill="#fdfdfd"/>
<rect x="468.7" y="591.8" width="46.6" height="13.9" fill="#fdfdfd"/>
<line x1="532.9" y1="584.0" x2="538.7" y2="591.8" stroke="#0a4a80" stroke-width="2" opacity="0.6"/>
<line x1="534.0" y1="584.1" x2="539.7" y2="590.6" stroke="#3a2a1a" stroke-width="4.2" stroke-linecap="round"/>
<line x1="534.7" y1="584.8" x2="539.2" y2="590.1" stroke="#c09068" stroke-width="2.2" stroke-linecap="round"/>
<circle cx="539.3000000000001" cy="590.2" r="0.9" fill="#7ad040"/>
<circle cx="529.4" cy="579.5" r="7.6" fill="#d4d4da" stroke="#3a2a1a" stroke-width="1.2"/>
<circle cx="529.4" cy="579.5" r="5.6" fill="#9fb2cc" stroke="#f4f4f6" stroke-width="0.8"/>
<ellipse cx="529.1" cy="579.2" rx="1.3" ry="3.6" transform="rotate(30 529.1 579.2)" fill="#e4eaf2"/>
<line x1="773.9" y1="598.8" x2="778.9" y2="606.1" stroke="#0a4a80" stroke-width="2" opacity="0.6"/>
<line x1="775.0" y1="598.9" x2="779.9" y2="604.9" stroke="#3a2a1a" stroke-width="4.2" stroke-linecap="round"/>
<line x1="775.7" y1="599.6" x2="779.4" y2="604.4" stroke="#c09068" stroke-width="2.2" stroke-linecap="round"/>
<circle cx="779.5" cy="604.5" r="0.9" fill="#7ad040"/>
<circle cx="770.4" cy="594.3" r="7.6" fill="#d4d4da" stroke="#3a2a1a" stroke-width="1.2"/>
<circle cx="770.4" cy="594.3" r="5.6" fill="#9fb2cc" stroke="#f4f4f6" stroke-width="0.8"/>
<ellipse cx="770.1" cy="594.0" rx="1.3" ry="3.6" transform="rotate(30 770.1 594.0)" fill="#e4eaf2"/>
<defs><linearGradient id="pg" x1="0" y1="0" x2="1" y2="1"><stop offset="0" stop-color="#8e8276"/><stop offset="0.5" stop-color="#c2bab2"/><stop offset="1" stop-color="#a8a098"/></linearGradient></defs>
<g transform="rotate(-6 600 570)"><rect x="591.4" y="561" width="17.6" height="18.2" rx="1.6" fill="url(#pg)" stroke="#2a2018" stroke-width="1.3"/><path d="M604 578.5 L608.5 574" stroke="#f2f0ee" stroke-width="1.6"/></g>
<text transform="matrix(0.9508 0 0 1.0 615.51 576.60)" font-size="16.5" fill="#000">Print</text>
<rect x="616.6" y="577.8" width="10.4" height="1" fill="#111"/>
<g>
<path d="M799.2 590.4 L809.2 603 M809.8 590 L799.6 603" stroke="#2a0808" stroke-width="7.6" stroke-linecap="round"/>
<path d="M799.2 590.4 L809.2 603 M809.8 590 L799.6 603" stroke="#b01016" stroke-width="5.2" stroke-linecap="round"/>
<path d="M797.8 589.6 L803 595.6" stroke="#e23a3e" stroke-width="1.6" stroke-linecap="round"/>
<path d="M810.8 589.2 L808.6 598" stroke="#d82a2e" stroke-width="1.6" stroke-linecap="round"/>
<path d="M797.4 603.4 L803 600.8" stroke="#d4c4c8" stroke-width="1.2" stroke-linecap="round"/>
</g>
</svg></body></html>
